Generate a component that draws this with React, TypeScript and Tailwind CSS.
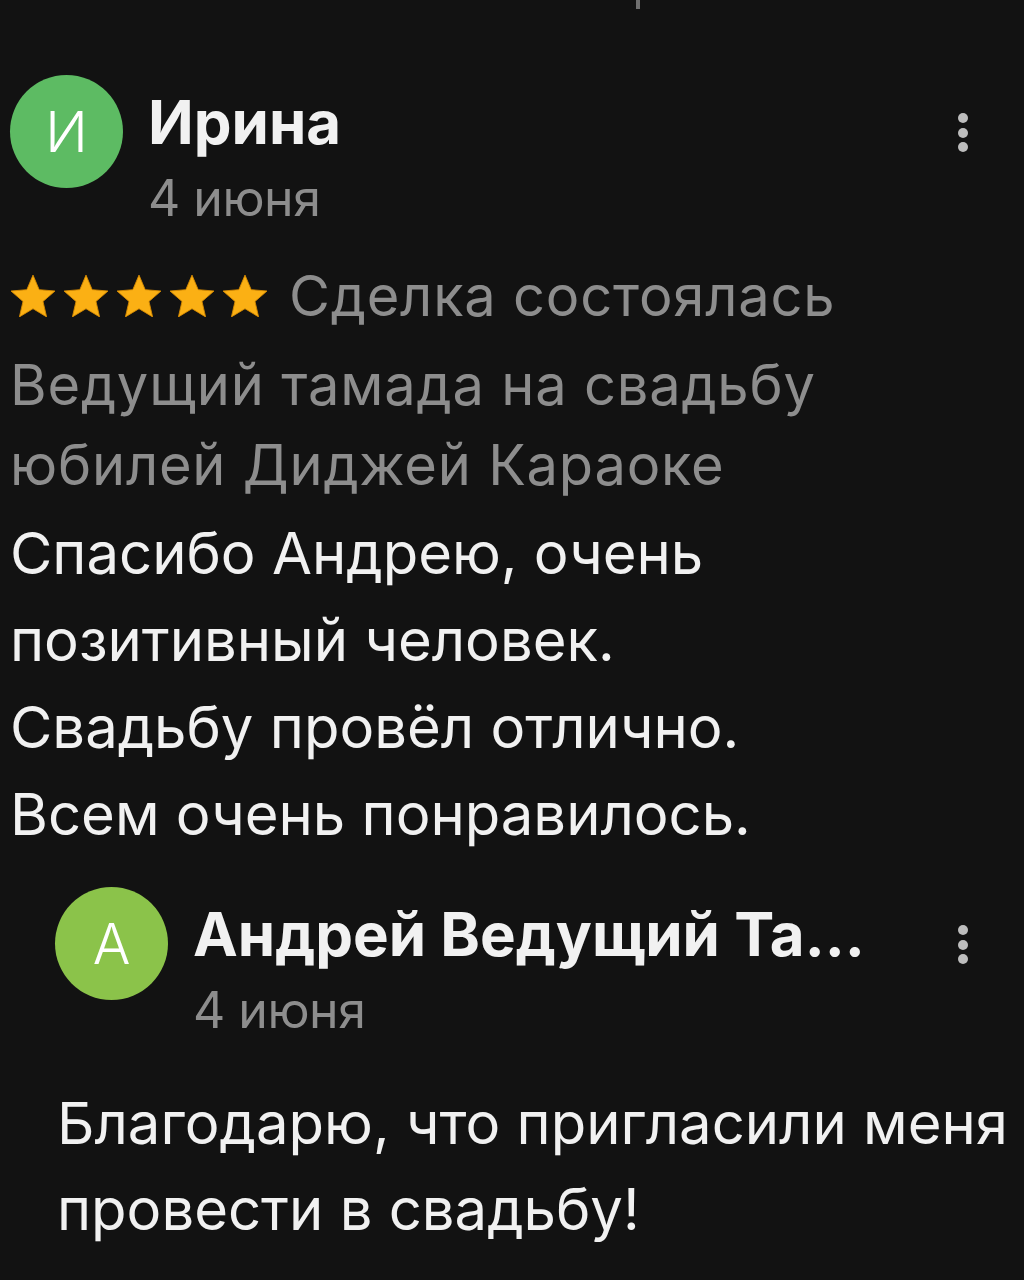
import React from "react";

const StarIcon: React.FC = () => (
  <svg viewBox="2 2 20 19" className="w-[44px] h-[42px]">
    <path
      d="M12 17.27L18.18 21l-1.64-7.03L22 9.24l-7.19-.61L12 2 9.19 8.63 2 9.24l5.46 4.73L5.82 21z"
      fill="#fbb014"
      stroke="#d68a00"
      strokeWidth="0.4"
      strokeLinejoin="round"
    />
  </svg>
);

const MoreDots: React.FC = () => (
  <div className="flex flex-col items-center gap-[4.5px] w-[10px]">
    <span className="block w-[10px] h-[10px] rounded-full bg-[#bdbdbd]" />
    <span className="block w-[10px] h-[10px] rounded-full bg-[#bdbdbd]" />
    <span className="block w-[10px] h-[10px] rounded-full bg-[#bdbdbd]" />
  </div>
);

type HeaderProps = {
  letter: string;
  name: string;
  date: string;
  color: string;
};

const AuthorHeader: React.FC<HeaderProps> = ({ letter, name, date, color }) => (
  <div className="flex items-start">
    <div
      className={`w-[113px] h-[113px] shrink-0 rounded-full flex items-center justify-center text-white text-[56px] font-light leading-none ${color}`}
    >
      {letter}
    </div>
    <div className="ml-[25px] pt-[14px] flex-1 min-w-0">
      <div className="text-[60px] leading-[66px] font-bold text-[#f1f1f1] whitespace-nowrap">
        {name}
      </div>
      <div className="mt-[15px] text-[50px] leading-[56px] text-[#8d8d8d] tracking-[-0.5px]">
        {date}
      </div>
    </div>
    <div className="pt-[38px] pl-[20px] pr-[56px]">
      <MoreDots />
    </div>
  </div>
);

const App: React.FC = () => {
  return (
    <div
      className="relative w-[1024px] h-[1280px] overflow-hidden bg-[#121212]"
      style={{ fontFamily: "Inter, Roboto, 'Noto Sans', sans-serif" }}
    >
      {/* text caret left over at the top */}
      <span className="absolute left-[636px] top-0 w-[4px] h-[9px] bg-[#6f6f6f]" />

      {/* Review */}
      <section className="pt-[75px] pl-[10px]">
        <AuthorHeader
          letter="И"
          name="Ирина"
          date="4 июня"
          color="bg-[#5dbb63]"
        />

        <div className="mt-[40px] flex items-center">
          <div className="flex items-center gap-[9px] pl-[1px]">
            <StarIcon />
            <StarIcon />
            <StarIcon />
            <StarIcon />
            <StarIcon />
          </div>
          <span className="ml-[22px] text-[56px] leading-[60px] text-[#8d8d8d] tracking-[0.8px]">
            Сделка состоялась
          </span>
        </div>

        <p className="mt-[19px] pr-[100px] text-[56px] leading-[80px] text-[#8d8d8d] tracking-[0.8px]">
          Ведущий тамада на свадьбу юбилей Диджей Караоке
        </p>

        <div className="mt-[5px] text-[58px] leading-[87px] text-[#f1f1f1] whitespace-nowrap">
          <p>Спасибо Андрею, очень</p>
          <p>позитивный человек.</p>
          <p>Свадьбу провёл отлично.</p>
          <p>Всем очень понравилось.</p>
        </div>
      </section>

      {/* Reply */}
      <section className="mt-[29px] pl-[55px]">
        <AuthorHeader
          letter="А"
          name="Андрей Ведущий Та…"
          date="4 июня"
          color="bg-[#8bc34a]"
        />

        <div className="mt-[42px] pl-[2px] text-[58px] leading-[86px] text-[#f1f1f1] whitespace-nowrap">
          <p>Благодарю, что пригласили меня</p>
          <p>провести в свадьбу!</p>
        </div>
      </section>
    </div>
  );
};

export default App;
